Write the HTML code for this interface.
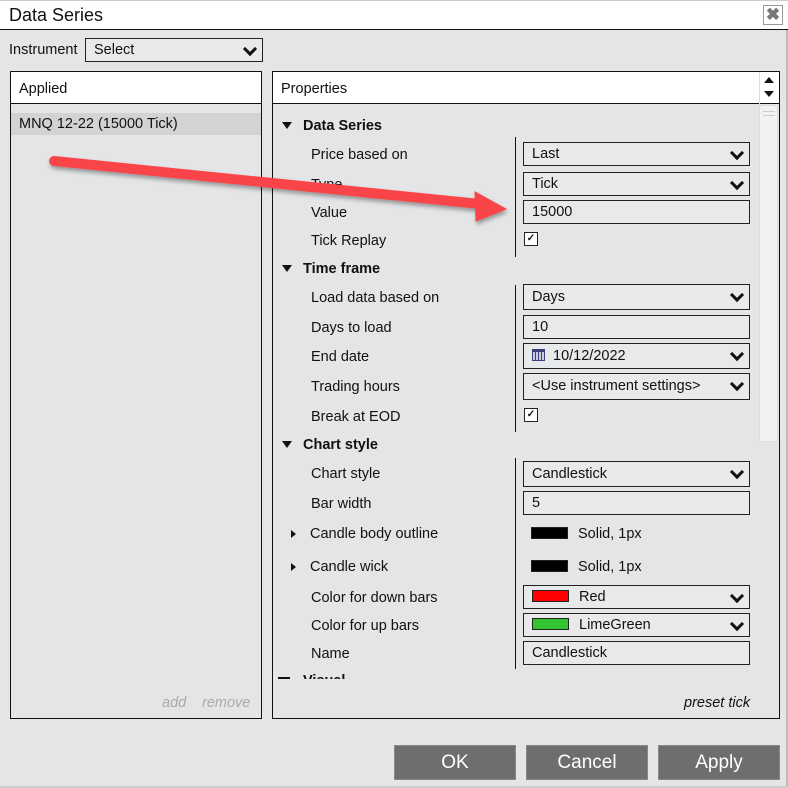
<!DOCTYPE html>
<html><head><style>
*{margin:0;padding:0;box-sizing:border-box}
body{width:788px;height:788px;background:#e4e5e7;font-family:"Liberation Sans",Arial,sans-serif;font-size:14.5px;color:#111;position:relative;overflow:hidden}
.a{position:absolute}
.lbl{position:absolute;left:311px;white-space:nowrap}
.hd{position:absolute;left:303px;font-weight:bold;white-space:nowrap}
.tri{position:absolute;left:282px;width:0;height:0;border-left:5px solid transparent;border-right:5px solid transparent;border-top:7px solid #111}
.rt{position:absolute;left:291px;width:0;height:0;border-top:4px solid transparent;border-bottom:4px solid transparent;border-left:5px solid #111}
.f{position:absolute;left:523px;width:227px;border:1px solid #222;background:#e8e9eb;padding-left:8px;line-height:22px;height:24px;white-space:nowrap}
.dd::after{content:"";position:absolute;right:7px;top:5px;width:7px;height:7px;border-right:3px solid #111;border-bottom:3px solid #111;transform:rotate(45deg)}
.cb{position:absolute;left:524px;width:14px;height:14px;border:1px solid #222;background:#fff;font-size:10px;line-height:12px;text-align:center;font-weight:bold}
.div{position:absolute;left:515px;width:1px;background:#111}
.btn{position:absolute;top:745px;width:122px;height:35px;background:#6e6e6e;border:1px solid #888;color:#fff;font-size:19px;text-align:center;line-height:33px}
.sw{display:inline-block;width:37px;height:12px;vertical-align:-1px;margin-right:10px;border:1px solid #222}
</style></head><body>
<div class="a" style="left:0;top:0;width:788px;height:30px;background:#fff;border-bottom:1px solid #111;border-top:1px solid #ccc"></div>
<div class="a" style="left:9px;top:5px;font-size:18px">Data Series</div>
<div class="a" style="left:763px;top:5px;width:20px;height:20px;border:1px solid #999;color:#777;font-size:17px;text-align:center;line-height:18px;font-weight:bold">✖</div>
<div class="a" style="left:786px;top:30px;width:2px;height:758px;background:#bbb"></div>
<div class="a" style="left:0;top:786px;width:788px;height:2px;background:#ccc"></div>
<div class="a" style="left:9px;top:42px">Instrument</div>
<div class="f dd" style="left:85px;top:38px;width:178px;background:#e8e9eb;">Select</div>

<div class="a" style="left:10px;top:71px;width:252px;height:648px;border:1px solid #111"></div>
<div class="a" style="left:11px;top:72px;width:250px;height:32px;background:#fff;border-bottom:1px solid #111"></div>
<div class="a" style="left:19px;top:81px">Applied</div>
<div class="a" style="left:11px;top:113px;width:250px;height:22px;background:#d2d3d5"></div>
<div class="a" style="left:19px;top:116px">MNQ 12-22 (15000 Tick)</div>
<div class="a" style="left:162px;top:695px;color:#aaa;font-style:italic">add</div>
<div class="a" style="left:202px;top:695px;color:#aaa;font-style:italic">remove</div>

<div class="a" style="left:272px;top:71px;width:508px;height:648px;border:1px solid #111"></div>
<div class="a" style="left:273px;top:72px;width:506px;height:32px;background:#fff;border-bottom:1px solid #111"></div>
<div class="a" style="left:281px;top:81px">Properties</div>
<div class="a" style="left:759px;top:72px;width:1px;height:32px;background:#ddd"></div>
<div class="a" style="left:764px;top:77px;border-left:5px solid transparent;border-right:5px solid transparent;border-bottom:6px solid #111"></div>
<div class="a" style="left:764px;top:91px;border-left:5px solid transparent;border-right:5px solid transparent;border-top:6px solid #111"></div>
<div class="a" style="left:759px;top:105px;width:19px;height:337px;background:#f2f2f2;border:1px solid #ddd"></div>
<div class="a" style="left:763px;top:111px;width:12px;height:1px;background:#ccc"></div>
<div class="a" style="left:763px;top:115px;width:12px;height:1px;background:#ccc"></div>

<div class="tri" style="top:122px"></div><div class="hd" style="top:118px">Data Series</div>
<div class="div" style="top:137px;height:120px"></div>
<div class="lbl" style="top:147px">Price based on</div><div class="f dd" style="top:142px">Last</div>
<div class="lbl" style="top:177px">Type</div><div class="f dd" style="top:172px">Tick</div>
<div class="lbl" style="top:205px">Value</div><div class="f" style="top:200px;height:24px">15000</div>
<div class="lbl" style="top:233px">Tick Replay</div><div class="cb" style="top:232px">✓</div>

<div class="tri" style="top:265px"></div><div class="hd" style="top:261px">Time frame</div>
<div class="div" style="top:285px;height:147px"></div>
<div class="lbl" style="top:290px">Load data based on</div><div class="f dd" style="top:284px;height:26px;line-height:24px">Days</div>
<div class="lbl" style="top:320px">Days to load</div><div class="f" style="top:315px">10</div>
<div class="lbl" style="top:349px">End date</div><div class="f dd" style="top:343px;height:26px;line-height:24px"><span style="display:inline-block;width:13px;height:12px;border:1px solid #3c3f7a;border-top:3px solid #3c3f7a;vertical-align:-1px;margin-right:8px;background:repeating-linear-gradient(90deg,#c8cce0 0 2px,#3c3f7a 2px 3px)"></span>10/12/2022</div>
<div class="lbl" style="top:379px">Trading hours</div><div class="f dd" style="top:373px;height:27px;line-height:25px">&lt;Use instrument settings&gt;</div>
<div class="lbl" style="top:409px">Break at EOD</div><div class="cb" style="top:408px">✓</div>

<div class="tri" style="top:441px"></div><div class="hd" style="top:437px">Chart style</div>
<div class="div" style="top:458px;height:211px"></div>
<div class="lbl" style="top:466px">Chart style</div><div class="f dd" style="top:461px;height:26px;line-height:24px">Candlestick</div>
<div class="lbl" style="top:496px">Bar width</div><div class="f" style="top:491px">5</div>
<div class="rt" style="top:530px"></div><div class="lbl" style="left:310px;top:526px">Candle body outline</div>
<div class="a" style="left:531px;top:526px;white-space:nowrap"><span class="sw" style="background:#000"></span>Solid, 1px</div>
<div class="rt" style="top:563px"></div><div class="lbl" style="left:310px;top:559px">Candle wick</div>
<div class="a" style="left:531px;top:559px;white-space:nowrap"><span class="sw" style="background:#000"></span>Solid, 1px</div>
<div class="lbl" style="top:590px">Color for down bars</div><div class="f dd" style="top:585px"><span class="sw" style="background:#f00"></span>Red</div>
<div class="lbl" style="top:618px">Color for up bars</div><div class="f dd" style="top:613px"><span class="sw" style="background:#33c433"></span>LimeGreen</div>
<div class="lbl" style="top:646px">Name</div><div class="f" style="top:641px">Candlestick</div>
<div class="a" style="left:278px;top:677px;width:12px;height:2px;background:#111"></div>
<div class="a" style="left:303px;top:671px;width:60px;height:8px;overflow:hidden"><div style="font-weight:bold;line-height:20px">Visual</div></div>
<div class="a" style="left:273px;top:680px;width:486px;height:10px;background:#e4e5e7"></div>
<div class="a" style="left:684px;top:695px;font-style:italic">preset tick</div>

<div class="btn" style="left:394px">OK</div>
<div class="btn" style="left:526px">Cancel</div>
<div class="btn" style="left:658px">Apply</div>

<svg class="a" style="left:0;top:0" width="788" height="788">
<defs><filter id="s" x="-10%" y="-50%" width="120%" height="200%"><feDropShadow dx="1" dy="3" stdDeviation="2" flood-color="#000" flood-opacity="0.35"/></filter></defs>
<g filter="url(#s)" fill="#f94448" stroke="#f94448">
<line x1="54" y1="161" x2="480" y2="204" stroke-width="10" stroke-linecap="round"/>
<polygon points="475,192 506,209 476,221" stroke-width="1"/>
</g>
</svg>
</body></html>
